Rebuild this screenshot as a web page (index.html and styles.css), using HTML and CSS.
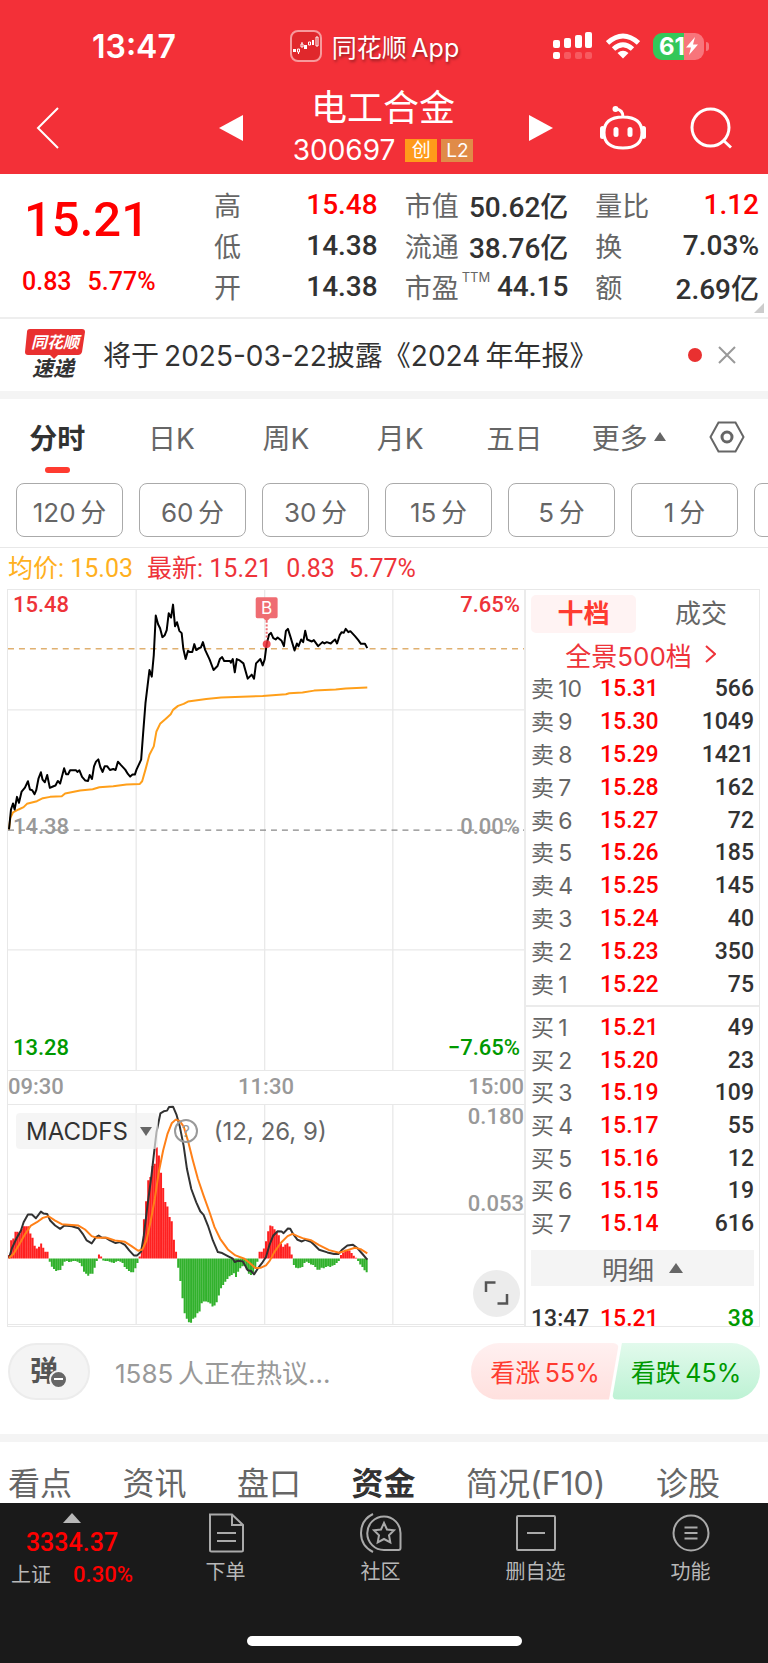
FILE: index.html
```html
<!DOCTYPE html>
<html lang="zh-CN">
<head>
  <meta charset="UTF-8" />
  <meta name="viewport" content="width=device-width, initial-scale=1" />
  <title>电工合金 300697</title>
  <link rel="stylesheet" href="styles.css">
</head>
<body>

<header class="top">
  <div class="status">
    <span class="clock">13:47</span>
    <span class="source">
      <svg class="app-logo" viewBox="0 0 32 32" width="32" height="32">
        <rect x="1" y="1" width="30" height="30" rx="7" fill="#e0282c" stroke="#f79a9c" stroke-width="2"/>
        <g fill="#fff"><rect x="3" y="19" width="3" height="3"/><rect x="14" y="15" width="3" height="4"/><rect x="22" y="10" width="2" height="5"/></g>
        <g fill="none" stroke="#fff"><path d="M7.500 19h2v3h-2zM11 14h2v3h-2zM12 12v2M8.500 22v2M18.500 12h2v3h-2zM26 7h2v9h-2z"/></g>
      </svg>
      同花顺&thinsp;App
    </span>
    <span class="signals">
      <svg viewBox="0 0 40 30" width="40" height="30">
        <g fill="#fff"><rect x="0" y="9" width="7" height="8" rx="2"/><rect x="11" y="7" width="7" height="10" rx="2"/><rect x="22" y="4" width="7" height="13" rx="2"/><rect x="32" y="1" width="7" height="16" rx="2"/><rect x="0" y="21" width="7" height="7" rx="2"/></g>
        <g fill="#f75a60"><rect x="11" y="21" width="7" height="7" rx="2"/><rect x="22" y="21" width="7" height="7" rx="2"/><rect x="32" y="21" width="7" height="7" rx="2"/></g>
      </svg>
      <svg viewBox="0 0 34 26" width="34" height="26">
        <g fill="none" stroke="#fff" stroke-width="5"><path d="M1.500 10Q17-4 32.500 10"/><path d="M7.500 16Q17 7.500 26.500 16"/></g>
        <path d="M11.500 20Q17 15.500 22.500 20L17 25.500z" fill="#fff"/>
      </svg>
      <span class="battery">61<svg viewBox="0 0 12 18" width="12" height="18"><path d="M9 0L0 10.500h5L3 18l9-10.500H7z" fill="#fff"/></svg></span>
    </span>
  </div>
  <div class="title-bar">
    <button class="icon-btn back" aria-label="返回">
      <svg viewBox="0 0 24 42" width="24" height="42"><path d="M22 1L2 21l20 20" fill="none" stroke="#fff" stroke-width="2"/></svg>
    </button>
    <button class="icon-btn prev" aria-label="上一只">
      <svg viewBox="0 0 24 26" width="24" height="26"><path d="M24 0v26L0 13z" fill="#fff"/></svg>
    </button>
    <div class="stock">
      <h1>电工合金</h1>
      <p>300697 <span class="tag">创</span><span class="tag level">L2</span></p>
    </div>
    <button class="icon-btn next" aria-label="下一只">
      <svg viewBox="0 0 24 26" width="24" height="26"><path d="M0 0v26l24-13z" fill="#fff"/></svg>
    </button>
    <button class="icon-btn robot" aria-label="助手">
      <svg viewBox="0 0 48 44" width="48" height="44">
        <g fill="none" stroke="#fff" stroke-width="3"><path d="M24 11c13 0 19 6 19 15.500S37 42 24 42 5 36 5 26.500 11 11 24 11zM24 11c0-5-2-7.500-7-8"/></g>
        <g fill="#fff"><circle cx="16.500" cy="3" r="3"/><rect x="14.500" y="21" width="5" height="10" rx="2.500"/><rect x="28.500" y="21" width="5" height="10" rx="2.500"/><rect x="1" y="20" width="5" height="13" rx="2.500"/><rect x="42" y="20" width="5" height="13" rx="2.500"/></g>
      </svg>
    </button>
    <button class="icon-btn search" aria-label="搜索">
      <svg viewBox="0 0 42 42" width="42" height="42"><g fill="none" stroke="#fff" stroke-width="3"><circle cx="20.500" cy="20.500" r="18.500"/><path d="M33 33l8 7.500"/></g></svg>
    </button>
  </div>
</header>

<section class="quote">
  <div class="price">
    <strong>15.21</strong>
    <span>0.83</span><span>5.77%</span>
  </div>
  <dl class="stats">
    <div><dt>高</dt><dd class="up">15.48</dd></div>
    <div><dt>市值</dt><dd>50.62亿</dd></div>
    <div><dt>量比</dt><dd class="up">1.12</dd></div>
    <div><dt>低</dt><dd>14.38</dd></div>
    <div><dt>流通</dt><dd>38.76亿</dd></div>
    <div><dt>换</dt><dd>7.03%</dd></div>
    <div><dt>开</dt><dd>14.38</dd></div>
    <div><dt>市盈<sup>TTM</sup></dt><dd>44.15</dd></div>
    <div><dt>额</dt><dd>2.69亿</dd></div>
  </dl>
  <i class="corner"></i>
</section>

<section class="news">
  <svg class="express" viewBox="0 0 60 52" width="60" height="52">
    <path d="M5 0h52q3 0 3 3l-3 20q-1 3-4 3H33l-4 4-4-4H3q-3 0-3-3L2 3q0-3 3-3z" fill="#e93030"/>
    <text x="30" y="19" class="express-a">同花顺</text>
    <text x="28" y="47" class="express-b">速递</text>
  </svg>
  <a href="#">将于&thinsp;2025-03-22披露《2024&thinsp;年年报》</a>
  <i class="dot"></i>
  <button class="icon-btn" aria-label="关闭">
    <svg viewBox="0 0 18 18" width="18" height="18"><path d="M1 1l16 16M17 1L1 17" stroke="#999" stroke-width="2"/></svg>
  </button>
</section>

<nav class="periods">
  <button class="active">分时</button>
  <button>日K</button>
  <button>周K</button>
  <button>月K</button>
  <button>五日</button>
  <button>更多<svg viewBox="0 0 12 9" width="12" height="9"><path d="M6 0l6 9H0z" fill="#666"/></svg></button>
  <button class="settings" aria-label="设置">
    <svg viewBox="0 0 36 32" width="36" height="32"><g fill="none" stroke="#666" stroke-width="2"><path d="M9.500 1.500h17L34.500 16l-8 14.500h-17L1.500 16z"/><circle cx="18" cy="16" r="5" stroke-width="3"/></g></svg>
  </button>
</nav>

<div class="minutes">
  <button>120&thinsp;分</button>
  <button>60&thinsp;分</button>
  <button>30&thinsp;分</button>
  <button>15&thinsp;分</button>
  <button>5&thinsp;分</button>
  <button>1&thinsp;分</button>
  <button aria-label="更多周期"></button>
</div>

<p class="legend"><span class="avg">均价: 15.03</span><span>最新: 15.21</span><span>0.83</span><span>5.77%</span></p>

<main class="board">
  <div class="charts">
    <div class="chart">
      <svg viewBox="23 29 1554 1446">
        <path class="grid" d="M409 29v1446M796 29v1446M1182 29v1446M23 390h1554M23 1113h1554"/>
        <path class="dash last" d="M23 206h1554"/>
        <path class="dash" d="M23 752h1554"/>
        <polyline class="line avg-line" points="26,750 30,715 38,699 55,690 70,683 80,673 110,665 128,656 150,652 185,650 195,642 240,633 278,629 298,623 340,620 380,615 420,613 427,605 437,570 449,525 462,500 470,455 481,432 500,415 513,403 520,390 535,378 552,372 565,365 620,357 665,353 790,348 860,343 870,340 910,338 945,332 1010,329 1040,326 1105,323"/>
        <polyline class="line" points="26,750 32,690 38,672 43,690 50,652 56,670 64,636 74,624 83,605 89,630 96,632 103,644 108,632 115,596 122,578 127,600 134,608 141,586 149,625 160,620 166,618 173,604 180,612 192,566 198,584 204,584 210,572 228,572 232,577 238,572 246,592 256,603 264,604 269,586 276,598 282,560 288,546 295,539 301,562 308,577 314,560 322,560 330,571 340,568 347,571 354,546 362,555 376,570 384,583 391,591 398,585 405,585 410,570 424,540 430,460 437,370 443,320 449,270 456,290 462,225 468,106 475,132 481,144 488,171 495,165 501,150 507,99 514,112 520,73 526,138 532,126 539,152 546,159 551,206 558,237 565,212 571,216 578,216 584,192 590,210 598,204 604,202 610,186 617,210 630,238 642,270 654,258 661,237 668,231 674,243 692,243 694,248 700,237 706,277 712,237 719,240 732,250 745,296 757,284 764,296 770,250 783,237 790,256 796,238 802,192 809,164 815,158 822,174 829,178 835,172 847,182 854,198 860,152 866,146 873,168 886,211 893,190 898,198 906,178 912,186 918,152 924,178 938,184 944,180 957,198 970,186 976,190 983,186 995,190 1001,184 1008,178 1014,190 1022,165 1028,156 1034,158 1040,146 1048,156 1054,153 1068,168 1078,180 1086,191 1098,191 1105,204"/>
        <path d="M802 122v56" stroke="#ef6c72" stroke-width="6" stroke-dasharray="6 5"/>
        <circle cx="802" cy="192" r="12" fill="#ee2d35" fill-opacity=".85"/>
        <path d="M774 51h56q5 0 5 5v53q0 5-5 5h-18l-10 10-10-10h-18q-5 0-5-5V56q0-5 5-5z" fill="#ef6c72"/>
        <text x="802" y="102" class="mark">B</text>
      </svg>
      <span class="label tl up-soft">15.48</span>
      <span class="label tr up-soft">7.65%</span>
      <span class="label ml">14.38</span>
      <span class="label mr">0.00%</span>
      <span class="label bl down">13.28</span>
      <span class="label br down">−7.65%</span>
    </div>
    <div class="times"><span>09:30</span><span>11:30</span><span>15:00</span></div>
    <div class="chart macd">
      <svg viewBox="23 197 1554 660">
        <path class="grid" d="M409 197v660M796 197v660M1182 197v660M23 526h1554"/>
        <path id="bars-up" fill="#ff2020"/>
        <path id="bars-down" fill="#31b12c"/>
        <polyline class="line dif" points="26,658 35,628 48,600 62,575 70,550 83,527 95,527 107,538 122,518 130,524 141,525 150,545 165,560 180,570 193,560 215,562 235,568 248,585 260,605 275,614 288,595 296,590 305,596 318,597 330,605 347,613 360,610 375,618 388,635 402,650 412,650 424,638 432,590 443,500 455,410 463,340 470,280 482,222 492,216 502,214 508,203 520,202 530,225 540,260 552,320 562,390 575,450 590,490 602,517 612,528 625,560 640,605 655,640 668,643 685,652 700,660 706,670 715,666 730,668 745,695 755,697 764,707 775,690 790,670 800,655 810,620 822,590 835,577 847,578 853,583 866,569 873,570 882,586 895,603 908,608 918,603 935,609 945,618 960,633 985,641 1005,646 1018,646 1030,632 1045,620 1062,618 1075,628 1090,645 1105,663"/>
        <polyline class="line dea" points="26,658 40,645 58,615 75,585 92,560 110,550 128,537 145,532 165,545 185,556 235,560 255,572 275,592 290,597 320,597 345,605 375,609 395,622 415,636 428,632 440,605 452,550 465,480 477,400 490,335 503,285 516,252 528,241 540,245 552,262 565,305 580,365 595,420 612,470 630,520 645,565 662,600 685,632 708,650 735,660 750,672 768,688 785,687 800,680 812,665 825,640 845,612 865,592 880,585 895,592 910,598 935,604 960,619 990,634 1020,642 1045,634 1068,627 1085,631 1105,644"/>
      </svg>
      <div class="indicator">
        <button class="picker">MACDFS<svg viewBox="0 0 12 9" width="12" height="9"><path d="M0 0h12L6 9z" fill="#666"/></svg></button>
        <button class="help" aria-label="说明">?</button>
        <span>(12, 26, 9)</span>
      </div>
      <span class="label tr">0.180</span>
      <span class="label mr">0.053</span>
      <button class="expand" aria-label="全屏">
        <svg viewBox="0 0 24 24" width="24" height="24"><path d="M1.500 11V1.500H11M22.500 13v9.500H13" fill="none" stroke="#555" stroke-width="2.500"/></svg>
      </button>
    </div>
  </div>

  <aside class="book">
    <div class="book-tabs">
      <button class="active">十档</button>
      <button>成交</button>
    </div>
    <a class="panorama" href="#">全景500档<svg viewBox="0 0 11 18" width="11" height="18"><path d="M1 1l9 8-9 8" fill="none" stroke="#ee3339" stroke-width="2"/></svg></a>
    <table class="sell">
      <tr><th>卖&thinsp;10</th><td>15.31</td><td>566</td></tr>
      <tr><th>卖&thinsp;9</th><td>15.30</td><td>1049</td></tr>
      <tr><th>卖&thinsp;8</th><td>15.29</td><td>1421</td></tr>
      <tr><th>卖&thinsp;7</th><td>15.28</td><td>162</td></tr>
      <tr><th>卖&thinsp;6</th><td>15.27</td><td>72</td></tr>
      <tr><th>卖&thinsp;5</th><td>15.26</td><td>185</td></tr>
      <tr><th>卖&thinsp;4</th><td>15.25</td><td>145</td></tr>
      <tr><th>卖&thinsp;3</th><td>15.24</td><td>40</td></tr>
      <tr><th>卖&thinsp;2</th><td>15.23</td><td>350</td></tr>
      <tr><th>卖&thinsp;1</th><td>15.22</td><td>75</td></tr>
    </table>
    <table class="buy">
      <tr><th>买&thinsp;1</th><td>15.21</td><td>49</td></tr>
      <tr><th>买&thinsp;2</th><td>15.20</td><td>23</td></tr>
      <tr><th>买&thinsp;3</th><td>15.19</td><td>109</td></tr>
      <tr><th>买&thinsp;4</th><td>15.17</td><td>55</td></tr>
      <tr><th>买&thinsp;5</th><td>15.16</td><td>12</td></tr>
      <tr><th>买&thinsp;6</th><td>15.15</td><td>19</td></tr>
      <tr><th>买&thinsp;7</th><td>15.14</td><td>616</td></tr>
    </table>
    <button class="detail">明细<svg viewBox="0 0 14 10" width="14" height="10"><path d="M7 0l7 10H0z" fill="#666"/></svg></button>
    <div class="trades">
      <table>
        <tr><td class="time">13:47</td><td>15.21</td><td class="down">38</td></tr>
      </table>
    </div>
  </aside>
</main>

<section class="talk">
  <button class="barrage" aria-label="弹幕">弹<i></i></button>
  <a href="#">1585&thinsp;人正在热议...</a>
  <div class="vote">
    <button class="bull">看涨&thinsp;55%</button>
    <button class="bear">看跌&thinsp;45%</button>
  </div>
</section>

<nav class="sections">
  <a href="#">看点</a>
  <a href="#">资讯</a>
  <a href="#">盘口</a>
  <a href="#" class="active">资金</a>
  <a href="#">简况(F10)</a>
  <a href="#">诊股</a>
</nav>

<footer class="dock">
  <div class="dock-row">
    <a class="index" href="#">
      <svg viewBox="0 0 18 10" width="18" height="10"><path d="M9 0l9 10H0z" fill="#b8b8b8"/></svg>
      <strong>3334.37</strong>
      <span>上证<em>0.30%</em></span>
    </a>
    <a href="#">
      <svg viewBox="0 0 40 40" width="40" height="40"><path d="M4 1.500h22L37 12v25q0 1.500-1.500 1.500h-30Q4 38.500 4 37zM26 1.500V12h11M11 20h19M11 28h19"/></svg>
      下单
    </a>
    <a href="#">
      <svg viewBox="0 0 42 40" width="42" height="40"><path d="M13 1Q1 7 1 20t12 19M24 3.500a16.500 16.500 0 0 1 16.500 16.500v15q0 2-2 2H24a16.500 16.500 0 0 1 0-33.500zM24 10l3 6.500 7 .8-5 5 1.300 7L24 26l-6.300 3.300 1.300-7-5-5 7-.8z"/></svg>
      社区
    </a>
    <a href="#">
      <svg viewBox="0 0 40 40" width="40" height="40"><rect x="1" y="3" width="38" height="34" rx="1"/><path d="M11 20h18"/></svg>
      删自选
    </a>
    <a href="#">
      <svg viewBox="0 0 40 40" width="40" height="40"><circle cx="20" cy="20" r="17.500"/><path d="M13.500 14.500h13M13.500 20h13M13.500 25.500h13"/></svg>
      功能
    </a>
  </div>
  <div class="home-bar"></div>
</footer>

<script>
  // MACD histogram, one value per minute
  const hist = [
    10, 55, 60, 80, 80, 75, 90, 97, 97, 97, 75, 62, 38, 30, 35, 45, 32, 20, 20,
    -10, -25, -32, -38, -36, -35, -22, -10, -8, -11, -10, -8, -8, -10, -14, -24, -40, -46, -52, -46, -46, -28, -8,
    12, 6, -6, -8, -8, -10, -12, -14, -10, -8, -10, -14, -26, -32, -38, -42, -42, -30, -14,
    6, 32, 118, 172, 235, 245, 278, 285, 335, 310, 258, 212, 170, 156, 125, 112, 56, 20,
    -28, -68, -120, -165, -182, -192, -194, -182, -178, -165, -160, -135, -130, -130, -132, -136, -145, -142,
    -132, -112, -90, -80, -70, -62, -54, -50, -45, -56, -40, -30, -24, -22, -34, -46, -50, -42, -30, -10,
    20, 20, 30, 52, 82, 99, 97, 88, 80, 70, 45, 35, 42, 46, 36, 12,
    -20, -28, -30, -28, -26, -14, -10, -14, -18, -20, -26, -34, -34, -28, -30, -26, -24, -26, -22, -20, -14, -8,
    10, 18, 26, 24, 24, 16, 8, 2, -8, -18, -26, -36, -42
  ];
  const zero = 659;
  const step = 6.45;

  function drawBars(id, test) {
    const d = hist.map((v, i) => test(v) ? `M${(23 + i * step).toFixed(1)} ${zero}v${-v}h6v${v}z` : '').join('');
    document.getElementById(id).setAttribute('d', d);
  }

  drawBars('bars-up', v => v > 0);
  drawBars('bars-down', v => v < 0);
</script>

</body>
</html>
```

FILE: styles.css
```css
* {
  box-sizing: border-box;
}
body {
  margin: 0;
  min-height: 100vh;
  font-family: Inter, "Noto Sans CJK SC", sans-serif;
  font-size: 24px;
  color: #323232;
  background: #fff;
}
h1, p, dl, dd {
  margin: 0;
}
button {
  padding: 0;
  border: none;
  background: none;
  font: inherit;
  color: inherit;
  cursor: pointer;
}
a {
  color: inherit;
  text-decoration: none;
}
svg {
  display: block;
  flex: none;
}
.up { color: #ff0000; }
.down { color: #009900; }
.up-soft { color: #ee3339; }

/* header */
.top {
  height: 174px;
  color: #fff;
  background: #f33038;
}
.status {
  display: grid;
  grid-template-columns: 1fr auto 1fr;
  align-items: center;
  height: 92px;
  padding: 0 59px 0 40px;
}
.clock {
  margin-left: 52px;
  font-size: 32px;
  font-weight: 600;
}
.source {
  display: flex;
  align-items: center;
  gap: 10px;
  font-size: 25px;
  font-weight: 400;
  text-shadow: 1px 2px 3px #0006;
}
.signals {
  display: flex;
  justify-content: flex-end;
  align-items: center;
  gap: 13px;
}
.battery {
  position: relative;
  display: flex;
  align-items: center;
  justify-content: center;
  gap: 1px;
  width: 51px;
  height: 27px;
  margin-right: 5px;
  border-radius: 9px;
  font-size: 24px;
  font-weight: 700;
  background: linear-gradient(90deg, #34c759 61%, #f8757b 61%);
}
.battery::after {
  content: "";
  position: absolute;
  right: -5px;
  top: 9px;
  width: 3px;
  height: 9px;
  border-radius: 0 3px 3px 0;
  background: #f8757b;
}
.title-bar {
  display: flex;
  align-items: center;
  height: 82px;
  padding: 0 36px;
}
.icon-btn {
  display: flex;
}
.title-bar .icon-btn { margin-top: -10px; }
.title-bar .prev { margin-left: auto; }
.stock {
  width: 286px;
  padding-right: 6px;
  text-align: center;
}
.stock h1 {
  font-size: 36px;
  font-weight: 400;
  line-height: 44px;
  margin-top: -10px;
}
.stock p {
  display: flex;
  align-items: center;
  justify-content: center;
  gap: 4px;
  font-size: 28px;
  line-height: 40px;
}
.tag {
  width: 32px;
  margin-left: 6px;
  font-size: 19px;
  line-height: 23px;
  background: #ff9b1a;
}
.level {
  margin-left: 0;
  background: #e08b48;
}
.title-bar .robot { margin-left: 46px; }
.title-bar .search { margin-left: 43px; }

/* quote */
.quote {
  position: relative;
  display: flex;
  height: 145px;
  padding: 10px 9px 0 0;
  border-bottom: 2px solid #eee;
}
.price {
  width: 214px;
  padding-left: 22px;
  font-family: Roboto, sans-serif;
  font-size: 25px;
  font-weight: 500;
  color: #ff0000;
}
.price strong {
  display: block;
  margin: 9px 0 20px 2px;
  font-size: 49px;
  font-weight: 500;
  line-height: 54px;
}
.price span {
  margin-right: 16px;
}
.stats {
  flex: 1;
  display: grid;
  grid-template-columns: repeat(3, 1fr);
  grid-auto-rows: 41px;
  column-gap: 27px;
}
.stats div {
  display: flex;
  align-items: center;
  justify-content: space-between;
  white-space: nowrap;
}
.stats dt {
  font-size: 27px;
  color: #666;
}
.stats sup {
  margin-left: 3px;
  font-size: 13px;
  line-height: 0;
  vertical-align: 16px;
}
.stats dd {
  font-family: Roboto, "Noto Sans CJK SC", sans-serif;
  font-size: 28px;
  font-weight: 500;
}
.corner {
  position: absolute;
  right: 4px;
  bottom: 4px;
  border-left: 10px solid transparent;
  border-bottom: 10px solid #ccc;
}

/* news */
.news {
  display: flex;
  align-items: center;
  height: 80px;
  padding: 0 32px 0 25px;
  border-bottom: 8px solid #f4f4f4;
}
.express text {
  font-style: italic;
  font-weight: 700;
  text-anchor: middle;
}
.express-a {
  font-size: 16px;
  fill: #fff;
}
.express-b {
  font-size: 21px;
  fill: #323232;
}
.news a {
  flex: 1;
  margin-left: 18px;
  padding-bottom: 2px;
  font-size: 28px;
  white-space: nowrap;
}
.dot {
  width: 14px;
  height: 14px;
  margin-right: 16px;
  border-radius: 50%;
  background: #e93030;
}

/* chart period tabs */
.periods {
  display: flex;
  height: 84px;
  font-size: 28px;
  color: #666;
}
.periods button {
  position: relative;
  flex: 1;
  display: flex;
  align-items: center;
  justify-content: center;
  gap: 6px;
  padding-bottom: 9px;
}
.periods .settings {
  flex: none;
  width: 82px;
}
.periods .active {
  font-weight: 700;
  color: #323232;
}
.periods .active::after {
  content: "";
  position: absolute;
  left: 50%;
  bottom: 10px;
  width: 25px;
  height: 6px;
  margin-left: -12px;
  border-radius: 3px;
  background: #ff3b30;
}
.minutes {
  display: flex;
  gap: 16px;
  height: 65px;
  padding-left: 16px;
  overflow: hidden;
  border-bottom: 1px solid #e8e8e8;
}
.minutes button {
  flex: none;
  width: 107px;
  height: 54px;
  border: 1px solid #aaa;
  border-radius: 8px;
  font-size: 26px;
  color: #666;
}
.legend {
  display: flex;
  gap: 14px;
  height: 41px;
  padding-left: 8px;
  font-family: Roboto, "Noto Sans CJK SC", sans-serif;
  font-size: 25px;
  line-height: 42px;
  color: #ee3339;
}
.legend .avg {
  color: #ffb020;
}

/* charts and order book */
.board {
  display: grid;
  grid-template-columns: 1fr 235px;
  height: 738px;
  margin: 0 8px 0 7px;
  border: 1px solid #e8e8e8;
  overflow: hidden;
}
.chart {
  position: relative;
}
.chart svg {
  width: 100%;
}
.chart > svg {
  border-bottom: 1px solid #e8e8e8;
}
.grid {
  fill: none;
  stroke: #e9e9e9;
  stroke-width: 4;
}
.dash {
  stroke: #888;
  stroke-width: 4;
  stroke-dasharray: 18 15;
}
.last {
  stroke: #e0b070;
}
.line {
  fill: none;
  stroke: #000;
  stroke-width: 6;
  stroke-linejoin: round;
}
.avg-line { stroke: #ff9f1a; }
.dif { stroke: #323232; }
.dea { stroke: #ff8018; }
.mark {
  font-size: 52px;
  fill: #fff;
  text-anchor: middle;
}
.label, .times {
  font-family: Roboto, sans-serif;
  font-size: 22px;
  font-weight: 500;
  line-height: 24px;
}
.label {
  position: absolute;
  left: 5px;
}
.tr, .mr, .br {
  left: auto;
  right: 4px;
}
.tl, .tr { top: 3px; }
.ml, .mr {
  top: 225px;
  color: #999;
}
.bl, .br { bottom: 11px; }
.times {
  display: flex;
  justify-content: space-between;
  height: 34px;
  line-height: 32px;
  color: #999;
  border-bottom: 1px solid #e8e8e8;
}
.macd .label {
  right: 0;
  color: #999;
}
.macd .tr { top: 0; }
.macd .mr { top: 87px; }
.indicator {
  position: absolute;
  top: 8px;
  left: 8px;
  display: flex;
  align-items: center;
  font-size: 24px;
  color: #666;
}
.picker {
  display: flex;
  align-items: center;
  gap: 12px;
  height: 36px;
  padding: 0 6px 0 10px;
  border-radius: 4px;
  color: #323232;
  background: #f0f0f0aa;
}
.picker svg { width: 12px; }
.help {
  width: 24px;
  height: 24px;
  margin: 0 16px;
  border: 2px solid #999;
  border-radius: 50%;
  font-size: 16px;
  line-height: 20px;
  color: #999;
}
.expand {
  position: absolute;
  right: 4px;
  bottom: 8px;
  display: flex;
  width: 47px;
  height: 47px;
  padding: 11px;
  border-radius: 50%;
  background: #ececec;
}
.book {
  display: flex;
  flex-direction: column;
  border-left: 2px solid #ebebeb;
  overflow: hidden;
}
.book > * {
  flex: none;
}
.book-tabs {
  display: grid;
  grid-template-columns: 105px 1fr;
  column-gap: 12px;
  height: 38px;
  margin: 5px 5px 6px;
  font-size: 26px;
  line-height: 38px;
  color: #666;
}
.book-tabs .active {
  border-radius: 5px;
  font-weight: 700;
  color: #ff3b30;
  background: #fff3f3;
}
.panorama {
  display: flex;
  align-items: center;
  justify-content: center;
  gap: 13px;
  height: 34px;
  padding: 0 4px 4px 0;
  color: #ee3339;
  font-size: 26px;
}
.book table {
  width: 100%;
  border-spacing: 0;
  font-family: Roboto, sans-serif;
  font-size: 23px;
  font-weight: 500;
  line-height: 24px;
}
.book th, .book td {
  padding: 0;
  text-align: left;
  color: #ff0000;
}
.book th, .book .time {
  width: 74px;
  padding-left: 5px;
  color: #666;
}
.book th {
  font-family: Inter, "Noto Sans CJK SC", sans-serif;
  font-size: 23px;
  font-weight: 400;
}
.book td:last-child {
  padding-right: 5px;
  text-align: right;
  color: #323232;
}
.book .time { color: #323232; }
.book td.down:last-child { color: #009900; }
.sell {
  height: 328px;
}
.buy {
  height: 240px;
  margin-top: 4px;
  padding-top: 5px;
  padding-bottom: 5px;
  border-top: 2px solid #ebebeb;
}
.detail {
  display: flex;
  align-items: center;
  justify-content: center;
  gap: 15px;
  height: 36px;
  margin: 5px 5px 0;
  font-size: 26px;
  color: #666;
  background: #f4f4f4;
}
.trades {
  padding-top: 21px;
}

/* discussion */
.talk {
  display: flex;
  align-items: center;
  height: 115px;
  padding: 0 8px 19px;
  border-bottom: 8px solid #f4f4f4;
}
.barrage {
  position: relative;
  width: 82px;
  height: 57px;
  border: 2px solid #ececec;
  border-radius: 29px;
  padding: 0 10px 4px 0;
  font-size: 28px;
  font-weight: 700;
  color: #555;
  background: #f4f4f4;
}
.barrage i {
  position: absolute;
  right: 20px;
  bottom: 9px;
  width: 19px;
  height: 19px;
  border: 2px solid #f4f4f4;
  border-radius: 50%;
  background: linear-gradient(#fff, #fff) center / 9px 2px no-repeat #666;
}
.talk a {
  flex: 1;
  margin-left: 25px;
  font-size: 26px;
  color: #999;
}
.vote {
  display: flex;
  font-size: 25px;
}
.vote button {
  width: 148px;
  height: 57px;
  border-radius: 29px 6px 6px 29px;
  color: #ff3b30;
  background: linear-gradient(#fff0f0, #ffe0de);
  clip-path: polygon(0 0, 100% 0, 138px 100%, 0 100%);
}
.vote .bear {
  margin-left: -7px;
  border-radius: 6px 29px 29px 6px;
  color: #009900;
  background: linear-gradient(#e2faec, #bdf2d4);
  clip-path: polygon(10px 0, 100% 0, 100% 100%, 0 100%);
}

/* section tabs, scrolled up against the dock */
.sections {
  display: flex;
  justify-content: space-between;
  height: 61px;
  padding: 22px 48px 0 8px;
  font-size: 32px;
  line-height: 39px;
  white-space: nowrap;
  color: #666;
}
.sections .active {
  font-weight: 700;
  color: #323232;
}

/* dock */
.dock {
  height: 160px;
  padding-top: 10px;
  color: #b8b8b8;
  background: #1a1a1a;
}
.dock-row {
  display: flex;
  height: 123px;
}
.dock-row a {
  flex: 1;
  display: flex;
  flex-direction: column;
  align-items: center;
  gap: 7px;
  font-size: 20px;
  line-height: 24px;
}
.dock-row a > svg {
  fill: none;
  stroke: #aaa;
  stroke-width: 2;
}
.dock-row .index {
  flex: none;
  width: 148px;
  padding-right: 4px;
  gap: 5px;
}
.dock-row .index svg {
  stroke: none;
}
.index strong, .index em {
  font-family: Roboto, sans-serif;
  font-weight: 500;
  font-style: normal;
  color: #ff0000;
}
.index strong {
  font-size: 25px;
  line-height: 30px;
}
.index em {
  margin-left: 22px;
  font-size: 22px;
}
.home-bar {
  width: 275px;
  height: 10px;
  margin: 0 auto;
  border-radius: 5px;
  background: #fff;
}
```
